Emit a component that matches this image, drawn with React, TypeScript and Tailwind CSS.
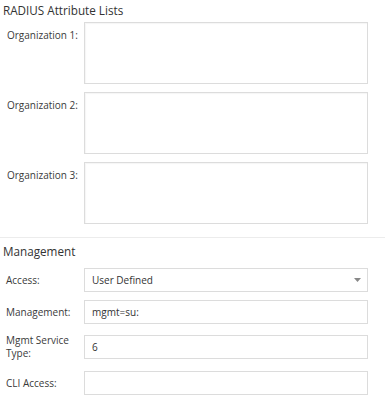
import React from "react";

export default function App() {
  return (
    <div className="w-[388px] h-[400px] bg-white overflow-hidden" style={{ fontFamily: '"Open Sans", sans-serif' }}>
      <div className="w-[385px]">
        <div className="pl-[3px] pt-[2px] text-[11.7px] leading-[16px] text-[#333]">RADIUS Attribute Lists</div>
        <div className="mt-[4px] flex flex-col gap-[8px]">
          {["Organization 1:", "Organization 2:", "Organization 3:"].map((l) => (
            <div key={l} className="flex items-start">
              <div className="w-[84px] pl-[7px] pt-[7px] text-[10px] leading-[13px] text-[#3a3a3a]">{l}</div>
              <div className="w-[284px] h-[62px] border border-[#dcdcdc] bg-white shadow-[inset_1px_1px_1px_rgba(0,0,0,0.04)]" />
            </div>
          ))}
        </div>
        <div className="mt-[13px] border-t border-[#ececec]" />
        <div className="pl-[3px] pt-[5px] text-[11.7px] leading-[16px] text-[#333]">Management</div>
        <div className="mt-[9px] flex flex-col">
          <div className="flex items-center h-[24px]">
            <div className="w-[84px] pl-[6px] text-[10px] leading-[13px] text-[#3a3a3a]">Access:</div>
            <div className="w-[284px] h-[24px] border border-[#dcdcdc] flex items-center justify-between pl-[7px] pr-[6px] text-[10px] text-[#333]">
              <span>User Defined</span>
              <svg width="7" height="4" viewBox="0 0 7 4"><path d="M0 0H7L3.5 4Z" fill="#888" /></svg>
            </div>
          </div>
          <div className="flex items-center h-[24px] mt-[8px]">
            <div className="w-[84px] pl-[6px] text-[10px] leading-[13px] text-[#3a3a3a]">Management:</div>
            <div className="w-[284px] h-[24px] border border-[#dcdcdc] flex items-center pl-[7px] text-[10px] text-[#333]">mgmt=su:</div>
          </div>
          <div className="flex items-start mt-[11px]">
            <div className="w-[84px] pl-[6px] -mt-[1px] text-[10px] leading-[13px] text-[#3a3a3a]">Mgmt Service<br />Type:</div>
            <div className="w-[284px] h-[24px] border border-[#dcdcdc] flex items-center pl-[7px] text-[10px] text-[#333]">6</div>
          </div>
          <div className="flex items-center h-[24px] mt-[11px]">
            <div className="w-[84px] pl-[6px] text-[10px] leading-[13px] text-[#3a3a3a]">CLI Access:</div>
            <div className="w-[284px] h-[24px] border border-[#dcdcdc]" />
          </div>
        </div>
      </div>
    </div>
  );
}
